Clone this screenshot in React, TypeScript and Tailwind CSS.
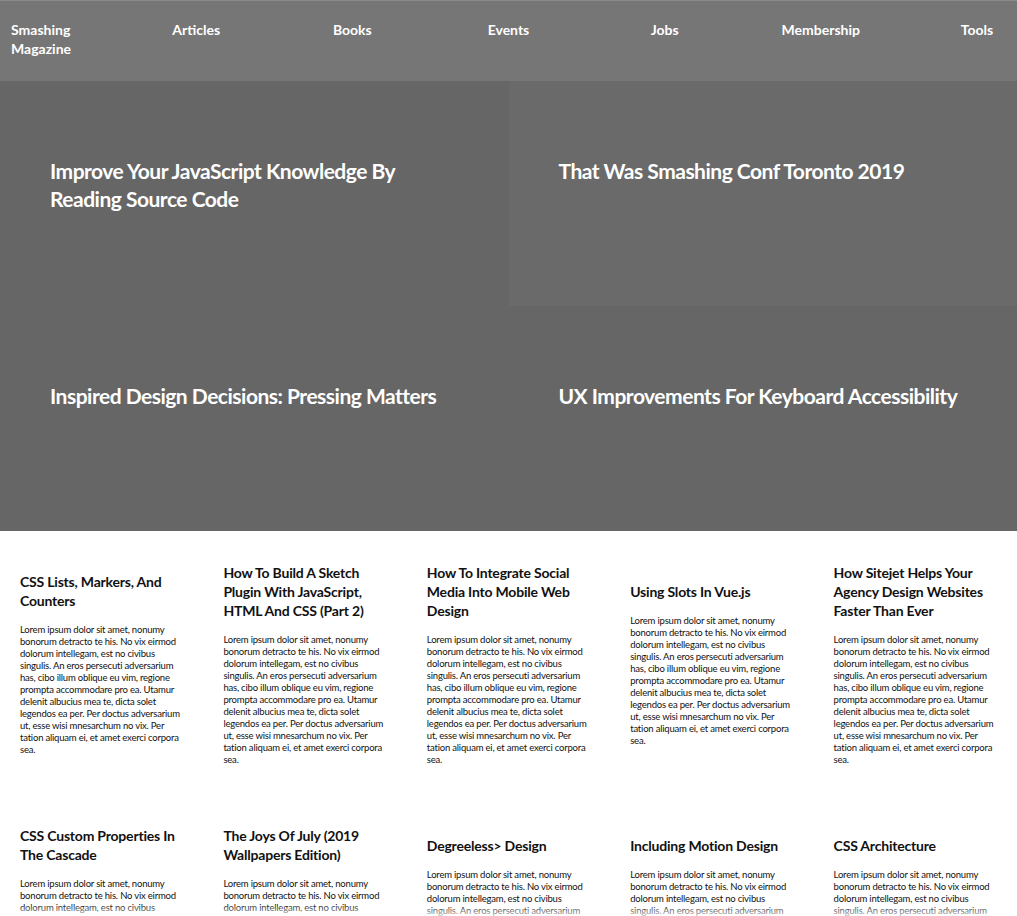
import React from "react";

const FONT = { fontFamily: 'Lato, "Open Sans", sans-serif' };

const nav = ["Articles", "Books", "Events", "Jobs", "Membership", "Tools"];

const heroes: { t: string[]; bg: string }[] = [
  { t: ["Improve Your JavaScript Knowledge By", "Reading Source Code"], bg: "bg-[#666666]" },
  { t: ["That Was Smashing Conf Toronto 2019"], bg: "bg-[#6a6a6a]" },
  { t: ["Inspired Design Decisions: Pressing Matters"], bg: "bg-[#666666]" },
  { t: ["UX Improvements For Keyboard Accessibility"], bg: "bg-[#666666]" },
];

const cards: string[][] = [
  ["CSS Lists, Markers, And", "Counters"],
  ["How To Build A Sketch", "Plugin With JavaScript,", "HTML And CSS (Part 2)"],
  ["How To Integrate Social", "Media Into Mobile Web", "Design"],
  ["Using Slots In Vue.js"],
  ["How Sitejet Helps Your", "Agency Design Websites", "Faster Than Ever"],
  ["CSS Custom Properties In", "The Cascade"],
  ["The Joys Of July (2019", "Wallpapers Edition)"],
  ["Degreeless> Design"],
  ["Including Motion Design"],
  ["CSS Architecture"],
];

const lorem = [
  "Lorem ipsum dolor sit amet, nonumy",
  "bonorum detracto te his. No vix eirmod",
  "dolorum intellegam, est no civibus",
  "singulis. An eros persecuti adversarium",
  "has, cibo illum oblique eu vim, regione",
  "prompta accommodare pro ea. Utamur",
  "delenit albucius mea te, dicta solet",
  "legendos ea per. Per doctus adversarium",
  "ut, esse wisi mnesarchum no vix. Per",
  "tation aliquam ei, et amet exerci corpora",
  "sea.",
];

export default function App() {
  return (
    <div className="relative w-[1017px] h-[916px] overflow-hidden bg-white" style={FONT}>
      <nav className="h-[81px] bg-[#767676] border-t border-[#8a8a8a] flex justify-between px-[11px] pt-[19px] text-white font-bold text-[14px] leading-[19px]">
        <div className="w-[58px] whitespace-nowrap">
          <span className="block">Smashing</span>
          <span className="block">Magazine</span>
        </div>
        {nav.map((n) => (
          <div key={n} className="w-[58px] flex justify-center whitespace-nowrap">
            {n}
          </div>
        ))}
      </nav>
      <section className="grid grid-cols-2">
        {heroes.map((h) => (
          <div key={h.t[0]} className={`${h.bg} h-[225px] px-[50px] pt-[76px]`}>
            <h2 className="text-white font-bold text-[21px] leading-[28px] tracking-[-0.5px] whitespace-nowrap">
              {h.t.map((l) => (
                <span key={l} className="block">
                  {l}
                </span>
              ))}
            </h2>
          </div>
        ))}
      </section>
      <section className="grid grid-cols-5 pt-[6px]">
        {cards.map((c) => (
          <div key={c[0]} className="h-[254px] flex flex-col justify-center px-[20px] whitespace-nowrap">
            <h3 className="text-[#111] font-bold text-[14px] leading-[19px] tracking-[-0.2px]">
              {c.map((l) => (
                <span key={l} className="block">
                  {l}
                </span>
              ))}
            </h3>
            <p className="mt-[14px] text-[#111] text-[9.5px] leading-[12px] tracking-[-0.2px]">
              {lorem.map((l) => (
                <span key={l} className="block">
                  {l}
                </span>
              ))}
            </p>
          </div>
        ))}
      </section>
      <div className="pointer-events-none absolute left-0 right-0 bottom-0 h-[12px] bg-gradient-to-b from-white/0 to-white/70" />
    </div>
  );
}
